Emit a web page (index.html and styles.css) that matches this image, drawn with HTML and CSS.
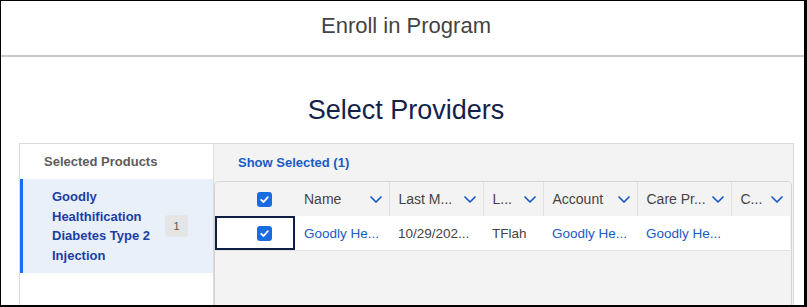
FILE: index.html
```html
<!DOCTYPE html>
<html lang="en">
<head>
<meta charset="utf-8">
<title>Enroll in Program</title>
<link rel="stylesheet" href="styles.css">
</head>
<body>
<div class="frame">
  <header class="modal-header">
    <h1 class="modal-title">Enroll in Program</h1>
  </header>
  <div class="modal-body">
    <h2 class="step-title">Select Providers</h2>
    <div class="panel">
      <aside class="side">
        <div class="side-title">Selected Products</div>
        <div class="side-item">
          <span class="item-name">Goodly Healthification Diabetes Type 2 Injection</span>
          <span class="badge">1</span>
        </div>
      </aside>
      <section class="main">
        <div class="main-head"><a class="show-selected" href="#">Show Selected (1)</a></div>
        <div class="table-wrap">
          <table class="grid">
            <colgroup>
              <col class="c-check"><col class="c-wide"><col class="c-wide"><col class="c-narrow"><col class="c-wide"><col class="c-wide"><col class="c-last">
            </colgroup>
            <thead>
              <tr>
                <th class="check-cell"><span class="checkbox"><svg viewBox="0 0 15 15" width="15" height="15"><polyline points="4.2,7.8 6.6,10 10.8,5.2" fill="none" stroke="#fff" stroke-width="1.8" stroke-linecap="round" stroke-linejoin="round"/></svg></span></th>
                <th><div class="th-inner"><span>Name</span><svg class="chev" viewBox="0 0 12 7" width="12" height="7"><polyline points="1,1 6,6 11,1" fill="none" stroke="#1a5bc4" stroke-width="1.7" stroke-linecap="round" stroke-linejoin="round"/></svg></div></th>
                <th class="div"><div class="th-inner"><span>Last M...</span><svg class="chev" viewBox="0 0 12 7" width="12" height="7"><polyline points="1,1 6,6 11,1" fill="none" stroke="#1a5bc4" stroke-width="1.7" stroke-linecap="round" stroke-linejoin="round"/></svg></div></th>
                <th class="div"><div class="th-inner"><span>L...</span><svg class="chev" viewBox="0 0 12 7" width="12" height="7"><polyline points="1,1 6,6 11,1" fill="none" stroke="#1a5bc4" stroke-width="1.7" stroke-linecap="round" stroke-linejoin="round"/></svg></div></th>
                <th class="div"><div class="th-inner"><span>Account</span><svg class="chev" viewBox="0 0 12 7" width="12" height="7"><polyline points="1,1 6,6 11,1" fill="none" stroke="#1a5bc4" stroke-width="1.7" stroke-linecap="round" stroke-linejoin="round"/></svg></div></th>
                <th class="div"><div class="th-inner"><span>Care Pr...</span><svg class="chev" viewBox="0 0 12 7" width="12" height="7"><polyline points="1,1 6,6 11,1" fill="none" stroke="#1a5bc4" stroke-width="1.7" stroke-linecap="round" stroke-linejoin="round"/></svg></div></th>
                <th class="div"><div class="th-inner"><span>C...</span><svg class="chev" viewBox="0 0 12 7" width="12" height="7"><polyline points="1,1 6,6 11,1" fill="none" stroke="#1a5bc4" stroke-width="1.7" stroke-linecap="round" stroke-linejoin="round"/></svg></div></th>
              </tr>
            </thead>
            <tbody>
              <tr>
                <td class="check-cell focus"><span class="checkbox"><svg viewBox="0 0 15 15" width="15" height="15"><polyline points="4.2,7.8 6.6,10 10.8,5.2" fill="none" stroke="#fff" stroke-width="1.8" stroke-linecap="round" stroke-linejoin="round"/></svg></span></td>
                <td><a class="link" href="#">Goodly He...</a></td>
                <td>10/29/202...</td>
                <td>TFlah</td>
                <td><a class="link" href="#">Goodly He...</a></td>
                <td><a class="link" href="#">Goodly He...</a></td>
                <td></td>
              </tr>
            </tbody>
          </table>
        </div>
      </section>
    </div>
  </div>
</div>
</body>
</html>
```

FILE: styles.css
```css
html, body {
  margin: 0;
  padding: 0;
  background: #fff;
}

body {
  font-family: "Liberation Sans", Arial, sans-serif;
}

.frame {
  width: 807px;
  height: 307px;
  box-sizing: border-box;
  border-style: solid;
  border-color: #000;
  border-width: 1px 3px 2px 1px;
  background: #fff;
  overflow: hidden;
  display: flex;
  flex-direction: column;
}

.modal-header {
  height: 56px;
  flex: none;
  box-sizing: border-box;
  padding: 12px 0 0 7px;
  border-bottom: 2px solid #c9c9c9;
  text-align: center;
}

.modal-title {
  margin: 0;
  font-size: 22px;
  line-height: 26px;
  font-weight: normal;
  color: #444;
}

.modal-body {
  flex: 1;
  min-height: 0;
  display: flex;
  flex-direction: column;
}

.step-title {
  margin: 37px 0 17px;
  padding-left: 7px;
  font-size: 27px;
  line-height: 32px;
  font-weight: normal;
  color: #14224a;
  text-align: center;
}

.panel {
  flex: 1;
  min-height: 0;
  margin: 0 10px 0 18px;
  border: 1px solid #dcdcdc;
  border-bottom: none;
  display: flex;
}

.side {
  width: 193px;
  flex: none;
  border-right: 1px solid #dcdcdc;
  background: #fff;
}

.side-title {
  height: 35px;
  padding-left: 24px;
  display: flex;
  align-items: center;
  font-size: 13px;
  font-weight: bold;
  color: #5c5c5c;
}

.side-item {
  display: flex;
  align-items: center;
  padding: 8px 25px 8px 29px;
  background: #eaf0fa;
  border-left: 3px solid #1b6ef3;
}

.item-name {
  flex: 1;
  font-size: 13px;
  line-height: 19.5px;
  font-weight: bold;
  color: #1c3ea3;
}

.badge {
  width: 23px;
  height: 22px;
  flex: none;
  display: flex;
  align-items: center;
  justify-content: center;
  background: #e5e5e5;
  border-radius: 3px;
  font-size: 11px;
  color: #555;
}

.main {
  flex: 1;
  min-width: 0;
  background: #f3f3f3;
  display: flex;
  flex-direction: column;
  padding-right: 1px;
}

.main-head {
  height: 37px;
  flex: none;
  padding-left: 24px;
  display: flex;
  align-items: center;
}

.show-selected {
  font-size: 13px;
  font-weight: bold;
  color: #1a5bc4;
  text-decoration: none;
}

.table-wrap {
  flex: 1;
  border: 1px solid #d4d4d4;
  border-bottom: none;
  border-radius: 5px 5px 0 0;
  background: #f3f3f3;
  overflow: hidden;
}

.grid {
  width: 575px;
  table-layout: fixed;
  border-collapse: collapse;
}

.c-check { width: 80px; }
.c-wide { width: 94px; }
.c-narrow { width: 60px; }
.c-last { width: 59px; }

.grid th {
  height: 34px;
  padding: 0;
  font-size: 14px;
  font-weight: normal;
  color: #444;
  text-align: left;
  background: #f3f3f3;
}

.grid th.div {
  border-left: 1px solid #e0e0e0;
}

.th-inner {
  display: flex;
  align-items: center;
  justify-content: space-between;
  padding: 0 7px 0 9px;
  white-space: nowrap;
}

.chev {
  flex: none;
  display: block;
}

.grid td {
  height: 34px;
  padding: 0 0 0 9px;
  background: #fff;
  border-bottom: 1px solid #e2e2e2;
  font-size: 13.5px;
  color: #444;
  white-space: nowrap;
  overflow: hidden;
}

.grid .check-cell {
  padding: 0 0 0 42px;
}

.grid td.focus {
  box-shadow: inset 0 0 0 2px #0f1f44;
}

.checkbox {
  width: 15px;
  height: 15px;
  display: block;
  background: #1b6be0;
  border-radius: 3px;
}

.checkbox svg {
  display: block;
}

.link {
  color: #1a5bc4;
  text-decoration: none;
}
```
